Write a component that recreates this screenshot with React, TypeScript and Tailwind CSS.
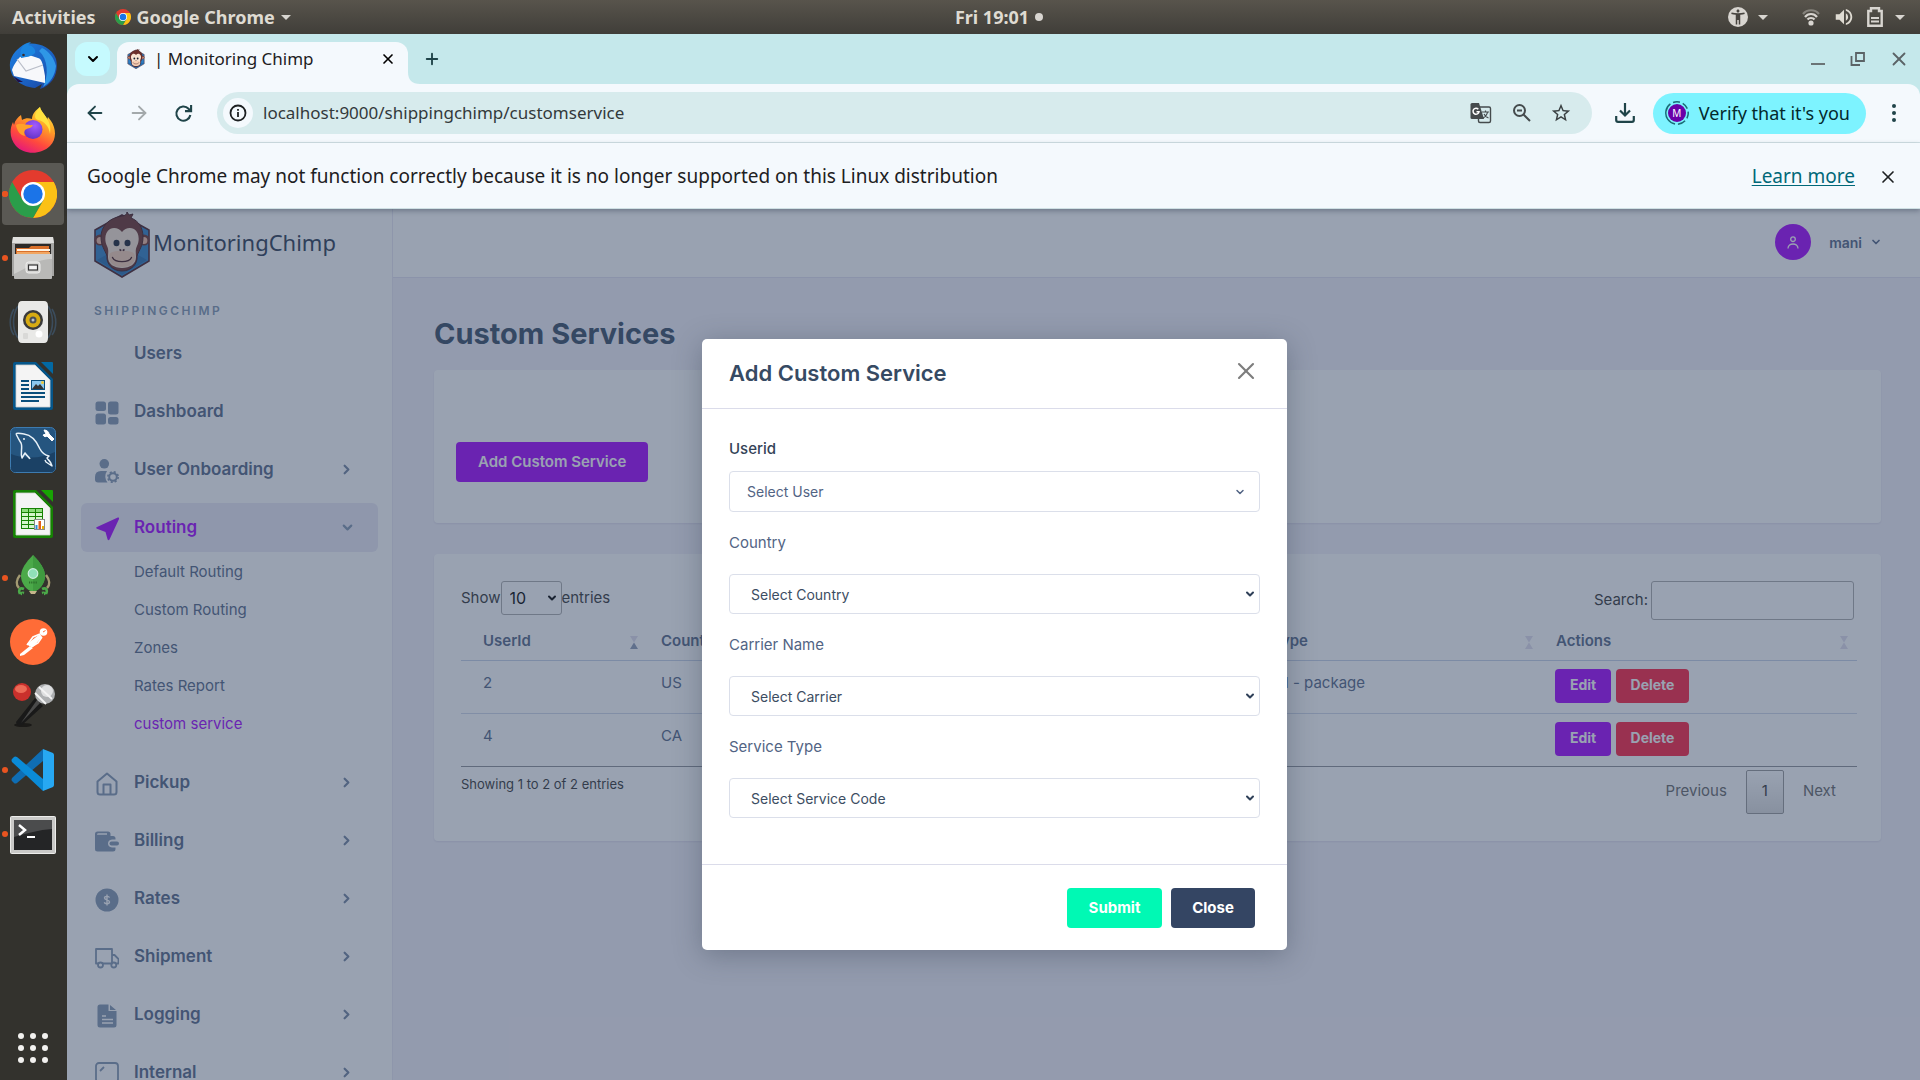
import type { ReactNode } from "react";
import { ArrowLeft, ArrowRight, ChevronDown, ChevronRight, X, Plus } from "lucide-react";
import { MdAccessibilityNew, MdOutlineStarBorder, MdVolumeUp } from "react-icons/md";

const UI_FONT = "font-['Noto_Sans',sans-serif]";
const WEB_FONT = "font-['Inter',sans-serif]";

/* ---------- Brand drawings ---------- */

function ChimpLogo({ className }: { className: string }) {
  return (
    <svg viewBox="0 0 56 66" className={className} aria-hidden="true">
      <path d="M28 3 L55 18 V49 L28 65 L1 49 V18 Z" fill="#2f7fc4" stroke="#4a1c22" strokeWidth="1.6" />
      <path d="M3 48 L28 34 L53 48 L28 63 Z" fill="#1c5d9d" opacity=".55" />
      <circle cx="6" cy="28" r="5.6" fill="#6b2f2a" />
      <circle cx="50" cy="28" r="5.6" fill="#6b2f2a" />
      <circle cx="6.2" cy="28.5" r="3.6" fill="#f0b9a0" />
      <circle cx="49.8" cy="28.5" r="3.6" fill="#f0b9a0" />
      <path d="M28 4 C31 4 33 2 33 0 L35 3 L39 2 L37 6 C45 9 49 16 49 25 C49 34 45 38 43 44 C44 52 37 59 28 59 C19 59 12 52 13 44 C11 38 7 34 7 25 C7 14 15 6 28 4 Z" fill="#6b2f2a" stroke="#43181c" strokeWidth="1" />
      <path d="M28 20 C31 16 36 15 40 17 C45 20 46 28 43 34 C41 38 42 41 42 45 C42 52 36 56 28 56 C20 56 14 52 14 45 C14 41 15 38 13 34 C10 28 11 20 16 17 C20 15 25 16 28 20 Z" fill="#f6e3d1" />
      <path d="M15 45 C15 39 21 39 28 39 C35 39 41 39 41 45 C41 51 36 55 28 55 C20 55 15 51 15 45 Z" fill="#f7cfb4" />
      <ellipse cx="22.5" cy="31" rx="3" ry="3.3" fill="#182030" />
      <ellipse cx="33.5" cy="31" rx="3" ry="3.3" fill="#182030" />
      <path d="M25.5 37.5 L27.3 38.6 M30.5 37.5 L28.7 38.6" stroke="#43181c" strokeWidth="1.5" />
      <path d="M18.5 45.5 C21 51 35 51 37.5 45.5" fill="none" stroke="#43181c" strokeWidth="1.4" strokeLinecap="round" />
    </svg>
  );
}

function ChromeLogo({ className }: { className: string }) {
  return (
    <svg viewBox="0 0 48 48" className={className} aria-hidden="true">
      <circle cx="24" cy="24" r="24" fill="#e33b2e" />
      <path d="M24 12 H44.800 A24 24 0 0 1 24 48 L34.400 30 Z" fill="#fbc116" />
      <path d="M3.200 12 A24 24 0 0 0 24 48 L34.400 30 L24 24 L13.600 30 Z" fill="#2a9d4a" />
      <circle cx="24" cy="24" r="12" fill="#fff" />
      <circle cx="24" cy="24" r="9.7" fill="#1b74e8" />
    </svg>
  );
}

const dockSvg = "size-12";

function Thunderbird() {
  return (
    <svg viewBox="0 0 48 48" className={dockSvg} aria-hidden="true">
      <defs>
        <linearGradient id="tb" x1="0" y1="0" x2="1" y2="1">
          <stop offset="0" stopColor="#1f7fe0" />
          <stop offset=".6" stopColor="#1a5fc0" />
          <stop offset="1" stopColor="#1c3f99" />
        </linearGradient>
      </defs>
      <path d="M14 3 C24 -1 42 3 47 17 C50 29 45 43 31 47 L33 42 L26 46 C14 45 2 38 1 25 C0 17 5 9 14 3 Z" fill="url(#tb)" />
      <path d="M33 6 C40 9 45 16 47 24 C46 34 41 41 34 45 C40 33 39 17 30 9 Z" fill="#2f97e6" />
      <path d="M11 15 C8 18 4 24 3 28 L5 34 L36 41 L36 34 C34 22 33 17 29 16 L20 13 Z" fill="#f7f8fb" />
      <path d="M8 17 L17 29 L34 23" fill="none" stroke="#b9bdc8" strokeWidth="1.2" />
      <path d="M12 16 C10 8 13 1 22 0 L19 3 C24 4 27 7 26 11 C22 15 17 15 12 16 Z" fill="#1b86e0" />
      <circle cx="14.500" cy="13" r="1.3" fill="#3b2a2a" />
      <path d="M4 34 L14 40 L9 40 Z" fill="#20104a" />
    </svg>
  );
}

function Firefox() {
  return (
    <svg viewBox="0 0 48 48" className={dockSvg} aria-hidden="true">
      <defs>
        <linearGradient id="ff" x1=".8" y1="0" x2=".3" y2="1">
          <stop offset="0" stopColor="#fff04a" />
          <stop offset=".35" stopColor="#ffa525" />
          <stop offset=".7" stopColor="#ff4a3d" />
          <stop offset="1" stopColor="#e4177d" />
        </linearGradient>
        <radialGradient id="ffc" cx=".6" cy=".3" r=".8">
          <stop offset="0" stopColor="#a25bff" />
          <stop offset="1" stopColor="#5b2fc0" />
        </radialGradient>
      </defs>
      <path d="M31 1 C32 7 37 9 38 14 L39 11 L42 15 C47 22 48 33 41 40 C32 49 15 49 7 40 C1 33 0 24 4 16 L5 19 C6 14 9 11 12 9 L13 14 C16 12 20 12 23 13 C23 8 27 4 31 1 Z" fill="url(#ff)" />
      <path d="M31 1 C32 7 44 14 41 28 C40 20 35 15 29 14 C24 13 26 6 31 1 Z" fill="#ffe23f" />
      <circle cx="24" cy="23.500" r="9.500" fill="url(#ffc)" />
      <path d="M7 19 C13 16 18 20 24 19 C22 23 18 22 16 24 C15 26 15 28 16 30 C11 29 8 25 7 19 Z" fill="#ffa02b" />
    </svg>
  );
}

function Files() {
  return (
    <svg viewBox="0 0 48 48" className={dockSvg} aria-hidden="true">
      <path d="M4 3 H44 L45 9 V42 H3 V9 Z" fill="#a6a6a4" />
      <path d="M4 3 H44 L45 9 H3 Z" fill="#e0e0de" />
      <rect x="6" y="10" width="36" height="12" fill="#2c2a28" />
      <path d="M7 14 H20 L22 12 H40 V22 H7 Z" fill="#d9702a" />
      <rect x="8" y="15" width="33" height="2" fill="#fff3e2" />
      <rect x="8" y="18" width="33" height="3" fill="#f1a661" />
      <rect x="5" y="20" width="38" height="25" rx="1" fill="#b9b9b7" />
      <path d="M5 20 H43 V25 C30 24 20 33 5 40 Z" fill="#cfcfcd" />
      <rect x="17" y="28" width="14" height="11" rx="2.500" fill="#d6d6d4" stroke="#efefed" />
      <rect x="19.500" y="31" width="9" height="5" fill="#f4f4f4" stroke="#333" strokeWidth="1.2" />
    </svg>
  );
}

function Rhythmbox() {
  return (
    <svg viewBox="0 0 48 48" className={dockSvg} aria-hidden="true">
      <g fill="none" stroke="#3f566c" strokeWidth="1.6" opacity=".75">
        <path d="M9 8 C3 17 3 31 9 40 M5 11 C0 19 0 30 5 37 M39 8 C45 17 45 31 39 40 M43 11 C48 19 48 30 43 37" />
      </g>
      <path d="M13 3 H35 Q39 3 39 8 V40 Q39 45 35 45 H13 Q9 45 9 40 V8 Q9 3 13 3 Z" fill="#e9e9e7" />
      <circle cx="24" cy="22" r="10" fill="#3a3a3a" />
      <circle cx="24" cy="22" r="7.500" fill="#d7ab12" />
      <circle cx="24" cy="22" r="3.500" fill="#4b4f55" />
      <circle cx="24" cy="22" r="1.500" fill="#b9c3cc" />
      <circle cx="30" cy="36" r="3.500" fill="#fff" />
      <rect x="14" y="35" width="5" height="6" rx="1" fill="#d9d9d7" />
    </svg>
  );
}

function OfficeDoc({ dark, light, children }: { dark: string; light: string; children: ReactNode }) {
  return (
    <svg viewBox="0 0 48 48" className={dockSvg} aria-hidden="true">
      <path d="M6 0 H27 L44 17 V46 Q44 48 42 48 H6 Q4 48 4 46 V2 Q4 0 6 0 Z" fill={dark} />
      <path d="M32 0 H43 Q44 0 44 1 V12 Z" fill={light} />
      <path d="M7 3 H26 L41 18 V45 H7 Z" fill="#f4f4f4" stroke="#cfcfcf" strokeWidth=".8" />
      {children}
    </svg>
  );
}

function Writer() {
  return (
    <OfficeDoc dark="#05568a" light="#0369a3">
      <path d="M12 19 H20 M12 23 H20 M12 27 H20 M12 31 H36 M12 35 H36 M12 39 H30" stroke="#0a4f7c" strokeWidth="2" />
      <rect x="22.500" y="18.500" width="13" height="9" fill="#8cc8ee" stroke="#0a4f7c" />
      <path d="M23 27 L27 22 L29 24 L31 22 L35 27 Z" fill="#333" />
      <circle cx="33.500" cy="20.500" r="1.500" fill="#f0c93a" />
    </OfficeDoc>
  );
}

function Calc() {
  return (
    <OfficeDoc dark="#168203" light="#18a303">
      <rect x="12.500" y="18.500" width="21" height="20" fill="#d4f5cc" stroke="#168203" />
      <rect x="13" y="19" width="20" height="3" fill="#8ddc7c" />
      <path d="M12 22.500 H34 M12 26.500 H34 M12 30.500 H34 M12 34.500 H34 M19.500 18 V39 M26.500 18 V39" stroke="#168203" />
      <rect x="25.500" y="29.500" width="10" height="10" fill="#fff" stroke="#8a8a8a" />
      <rect x="26.500" y="35" width="2" height="4" fill="#2b8fd6" />
      <rect x="29.500" y="31" width="2.500" height="8" fill="#e0601c" />
      <rect x="33" y="36" width="2" height="3" fill="#f0b400" />
    </OfficeDoc>
  );
}

function Workbench() {
  return (
    <svg viewBox="0 0 48 48" className={dockSvg} aria-hidden="true">
      <rect x="1.500" y="1.500" width="45" height="45" rx="5" fill="#25557f" stroke="#3d7bb0" />
      <path d="M2 28 C18 34 34 32 46 26 V42 Q46 46 42 46 H6 Q2 46 2 42 Z" fill="#1b4165" />
      <path d="M7 8 C8 6 12 8 15 8 C23 9 28 16 31 23 C33 27 35 29 40 30 L38 32 C39 34 42 35 43 40 L37 36 L36 34 M7 8 C9 12 10 14 12 17 C14 21 11 27 13 32 L16 27 C18 30 20 31 21 33" fill="none" stroke="#e8f1f8" strokeWidth="1.5" strokeLinejoin="round" />
      <circle cx="15" cy="13" r=".9" fill="#fff" />
      <path d="M35 4 L37 8 L34 9 C35 11 37 11 38 10 L43 15 L45 13 L40 8 C40 6 38 4 35 4 Z" fill="#fff" stroke="#fff" />
    </svg>
  );
}

function Rocket() {
  return (
    <svg viewBox="0 0 48 48" className={dockSvg} aria-hidden="true">
      <path d="M11 21 C7 26 7 31 10 34 M37 21 C41 26 41 31 38 34" fill="none" stroke="#a39a72" strokeWidth="2.500" />
      <path d="M24 1 C31 8 36 15 36 22 C36 29 31 36 24 38 C17 36 12 29 12 22 C12 15 17 8 24 1 Z" fill="#4ba949" />
      <path d="M24 1 C31 8 36 15 36 22 C36 29 31 36 24 38 Z" fill="#3f9a3f" />
      <circle cx="24" cy="19.500" r="4.800" fill="#8fe0b8" stroke="#cdeedd" strokeWidth="1.200" />
      <path d="M20 28.500 H28" stroke="#2c6f2c" strokeWidth="2" strokeDasharray="1.200 1" />
      <path d="M20 37 H28 L26 40 H22 Z" fill="#c5b58a" />
      <path d="M15 35 C11 33 9 36 11 40 M15 39 C12 38 12 40 13 40 M33 35 C37 33 39 36 37 40 M33 39 C36 38 36 40 35 40" fill="none" stroke="#4ba949" strokeWidth="2.600" />
    </svg>
  );
}

function Postman() {
  return (
    <svg viewBox="0 0 48 48" className={dockSvg} aria-hidden="true">
      <circle cx="24" cy="24" r="23" fill="#ff6c37" />
      <circle cx="34.500" cy="14" r="3.800" fill="#fff" />
      <path d="M31 16 L33 19 L24 29 L20 28 L18 26 Z" fill="#fff" />
      <path d="M18 27 L24 19 L31 16 M33 19 L29 25 L22 29" fill="none" stroke="#fff" strokeWidth="1.600" />
      <path d="M21 28 L11 36 L11 38 L15 37 L24 30 Z" fill="#fff" />
      <path d="M34 14 L36.500 12.500" stroke="#ff6c37" />
    </svg>
  );
}

function Recorder() {
  return (
    <svg viewBox="0 0 48 48" className={dockSvg} aria-hidden="true">
      <ellipse cx="14" cy="43" rx="9" ry="2" fill="#1b1a18" />
      <path d="M26 16 L34 24 L13 43 Q8 45 7 40 Z" fill="#191919" />
      <path d="M28 18 L31 21 L12 41 Z" fill="#4a4a4a" />
      <circle cx="36" cy="12" r="10" fill="#aeb0b2" />
      <circle cx="38" cy="9" r="6" fill="#dedfe0" />
      <path d="M26 11 L37 22 M30 5 L43 17" stroke="#f3f3f3" strokeWidth="1.800" />
      <circle cx="13" cy="10" r="9" fill="#c9302c" />
      <ellipse cx="12" cy="7" rx="6" ry="4" fill="#ec6a56" />
    </svg>
  );
}

function VsCode() {
  return (
    <svg viewBox="0 0 48 48" className={dockSvg} aria-hidden="true">
      <path d="M3 32 L34 3 V15 L8 37 Q6 38 5 37 L3 35 Q2 34 3 32 Z" fill="#0f6db3" />
      <path d="M3 16 L34 45 V33 L8 11 Q6 10 5 11 L3 13 Q2 14 3 16 Z" fill="#0a8bd8" />
      <path d="M34 3 L44 7 Q45 8 45 9 V39 Q45 40 44 41 L34 45 Z" fill="#27a8f2" />
    </svg>
  );
}

function Terminal() {
  return (
    <svg viewBox="0 0 48 48" className={dockSvg} aria-hidden="true">
      <rect x="1.500" y="6.500" width="45" height="37" rx="1" fill="#c9c9c7" stroke="#ededeb" />
      <rect x="5" y="10" width="38" height="30" fill="#242526" />
      <path d="M5 10 H43 V19 C30 20 18 23 5 27 Z" fill="#4b4c4d" />
      <path d="M10 15 L16 20 L10 25" fill="none" stroke="#fff" strokeWidth="2.500" />
      <path d="M18 27 H26" stroke="#fff" strokeWidth="2" />
    </svg>
  );
}

const dockApps: { name: string; icon: ReactNode; running?: boolean; active?: boolean }[] = [
  { name: "Thunderbird Mail", icon: <Thunderbird /> },
  { name: "Firefox", icon: <Firefox /> },
  { name: "Google Chrome", icon: <ChromeLogo className={dockSvg} />, running: true, active: true },
  { name: "Files", icon: <Files />, running: true },
  { name: "Rhythmbox", icon: <Rhythmbox /> },
  { name: "LibreOffice Writer", icon: <Writer /> },
  { name: "MySQL Workbench", icon: <Workbench /> },
  { name: "LibreOffice Calc", icon: <Calc /> },
  { name: "Robo 3T", icon: <Rocket />, running: true },
  { name: "Postman", icon: <Postman /> },
  { name: "Sound Recorder", icon: <Recorder /> },
  { name: "Visual Studio Code", icon: <VsCode />, running: true },
  { name: "Terminal", icon: <Terminal />, running: true },
];

function Caret() {
  return <span className="border-x-[5px] border-t-[5px] border-x-transparent border-t-[#d8d5d0]" />;
}

function SystemBar() {
  return (
    <header className={`${UI_FONT} grid h-[34px] shrink-0 grid-cols-3 items-center bg-gradient-to-b from-[#58544c] to-[#403e39] text-[18px] font-bold text-[#dfdbd2]`}>
      <div className="flex items-center pl-3">
        <button>Activities</button>
        <button className="ml-[19px] flex items-center gap-1.5">
          <ChromeLogo className="size-4" />
          Google Chrome
          <Caret />
        </button>
      </div>
      <button className="flex items-center justify-center gap-1.5 pl-[78px]">
        Fri 19:01
        <span className="size-2 rounded-full bg-[#d8d5d0]" />
      </button>
      <div className="flex items-center justify-end pr-[15px]">
        <button aria-label="Accessibility" className="flex items-center gap-2.5">
          <span className="flex size-5 items-center justify-center rounded-full bg-[#d8d5d0] text-[#47443f]">
            <MdAccessibilityNew className="size-[18px]" />
          </span>
          <Caret />
        </button>
        <button aria-label="System" className="ml-[33px] flex items-center gap-3">
          <svg viewBox="0 0 20 18" className="h-[18px] w-5" fill="none" stroke="#d8d5d0" strokeWidth="2.200" aria-hidden="true">
            <path d="M2 6 C6 1 14 1 18 6" opacity=".4" />
            <path d="M4 9 C7 5 13 5 16 9" />
            <path d="M6.500 11.500 C8 9.500 12 9.500 13.500 11.500" />
            <circle cx="10" cy="15" r="1.500" fill="#d8d5d0" />
          </svg>
          <MdVolumeUp className="size-[22px]" />
          <svg viewBox="0 0 16 20" className="h-5 w-4" aria-hidden="true">
            <path d="M1.300 4 H4 V1.300 H12 V4 H14.700 V18.700 H1.300 Z" fill="none" stroke="#d8d5d0" strokeWidth="2.400" />
            <path d="M4 11 H12 M4 14.500 H12" stroke="#d8d5d0" strokeWidth="2" />
          </svg>
          <Caret />
        </button>
      </div>
    </header>
  );
}

function Dock() {
  return (
    <nav aria-label="Dock" className="flex w-[67px] shrink-0 flex-col justify-between bg-[#33322d]">
      <ul className="flex flex-col gap-0.5 pt-px">
        {dockApps.map((app) => (
          <li key={app.name} className="relative pl-0.5">
            {app.running && <span className="absolute top-7 left-0.5 size-1.5 rounded-full bg-[#e95420]" />}
            <button
              aria-label={app.name}
              className={app.active ? "flex size-[62px] items-center justify-center rounded bg-[#5a5954]" : "flex size-[62px] items-center justify-center"}
            >
              {app.icon}
            </button>
            {app.active && <span className="absolute top-7 left-0.5 size-1.5 rounded-full bg-[#e95420]" />}
          </li>
        ))}
      </ul>
      <button aria-label="Show applications" className="mr-[19px] mb-[17px] ml-[18px] grid grid-cols-3 gap-1.5">
        {Array.from({ length: 9 }, (_, i) => (
          <span key={i} className="size-1.5 rounded-full bg-[#f2f1ef]" />
        ))}
      </button>
    </nav>
  );
}

/* ---------- Browser chrome ---------- */

function TabStrip() {
  return (
    <div className="flex h-[50px] items-center justify-between bg-[#c5e8eb] pr-[10px] pl-2">
      <div className="flex h-full items-end">
        <button aria-label="Search tabs" className="mb-2 flex h-[34px] w-[35px] items-center justify-center rounded-xl bg-[#c6fafe]">
          <ChevronDown className="size-4 text-black" strokeWidth={3} />
        </button>
        <div className="relative ml-[7px] flex h-[42px] w-[291px] items-center rounded-t-xl bg-[#f4f9fd] pr-3 pb-2 pl-[9px]">
          <svg viewBox="0 0 12 12" className="absolute bottom-0 -left-3 size-3" aria-hidden="true">
            <path d="M12 0 V12 H0 C8 12 12 8 12 0 Z" fill="#f4f9fd" />
          </svg>
          <svg viewBox="0 0 12 12" className="absolute -right-3 bottom-0 size-3" aria-hidden="true">
            <path d="M0 0 V12 H12 C4 12 0 8 0 0 Z" fill="#f4f9fd" />
          </svg>
          <ChimpLogo className="h-5 w-5" />
          <span className="ml-2 flex-1 text-[17px] text-[#1d2022]">| Monitoring Chimp</span>
          <button aria-label="Close tab">
            <X className="size-4 text-black" strokeWidth={2.500} />
          </button>
        </div>
        <button aria-label="New tab" className="mb-4 ml-[15px]">
          <Plus className="size-[18px] text-[#1f4449]" strokeWidth={2.500} />
        </button>
      </div>
      <div className="flex items-center text-[#5b6366]">
        <button aria-label="Minimize" className="mt-2.5 h-0.5 w-3.5 bg-[#6b7476]" />
        <button aria-label="Restore" className="ml-[25px]">
          <svg viewBox="0 0 16 16" className="size-4" fill="none" stroke="currentColor" strokeWidth="1.800" aria-hidden="true">
            <path d="M6 2 H14 V10 H6 Z M1.500 5 V14 H10" />
          </svg>
        </button>
        <button aria-label="Close window" className="ml-[22px]">
          <X className="size-[22px]" strokeWidth={2} />
        </button>
      </div>
    </div>
  );
}

function Toolbar() {
  return (
    <div className="bg-[#c5e8eb]">
      <div className="flex h-[59px] items-center rounded-t-xl border-b border-[#d3e2e6] bg-[#f4f9fd] pr-6 pl-[17px]">
        <button aria-label="Back">
          <ArrowLeft className="size-[22px] text-[#1f4449]" />
        </button>
        <button aria-label="Forward" className="ml-[22px]">
          <ArrowRight className="size-[22px] text-[#a3a9ab]" />
        </button>
        <button aria-label="Reload" className="ml-6">
          <svg viewBox="0 0 18 18" className="size-[19px]" fill="none" stroke="#1f4449" strokeWidth="2" aria-hidden="true">
            <path d="M15.500 10.500 A6.700 6.700 0 1 1 13.800 4.500 L16 6.600 M16.200 1 V6.800 H10.400" />
          </svg>
        </button>
        <div className="ml-6 flex h-[42px] flex-1 items-center rounded-full bg-[#d7ebed] pr-5 pl-1.5">
          <button aria-label="Site information" className="flex size-[30px] items-center justify-center rounded-full bg-[#f4f9fd]">
            <svg viewBox="0 0 18 18" className="size-[18px]" fill="none" stroke="#1d2022" strokeWidth="1.800" aria-hidden="true">
              <circle cx="9" cy="9" r="7.500" />
              <path d="M9 8 V13 M9 5 V6.800" />
            </svg>
          </button>
          <input
            aria-label="Address"
            defaultValue="localhost:9000/shippingchimp/customservice"
            className="ml-2.5 flex-1 bg-transparent text-[17px] text-[#33393b] outline-none"
          />
          <button aria-label="Translate this page">
            <svg viewBox="0 0 22 22" className="size-[22px]" aria-hidden="true">
              <rect x="8.500" y="5" width="12" height="15.500" rx="1.500" fill="none" stroke="#454b4d" strokeWidth="1.400" />
              <path d="M2 1 H9 L14 17 H2 Q.500 17 .500 15.500 V2.500 Q.500 1 2 1 Z" fill="#454b4d" />
              <path d="M8.300 7.200 A3 3 0 1 0 9 9.800 H6.500" fill="none" stroke="#fff" strokeWidth="1.500" />
              <path d="M12 10 H19 M15.500 8.500 V10 M17.500 10 C17 13 15 15 13 16 M14 12 C15 14 17 15.500 18.500 16" fill="none" stroke="#454b4d" strokeWidth="1.200" />
            </svg>
          </button>
          <button aria-label="Zoom" className="ml-5">
            <svg viewBox="0 0 20 20" className="size-5" fill="none" stroke="#454b4d" strokeWidth="2" aria-hidden="true">
              <circle cx="7.500" cy="7.500" r="5.500" />
              <path d="M11.500 11.500 L18 18 M5 7.500 H10" />
            </svg>
          </button>
          <button aria-label="Bookmark this tab" className="ml-[18px]">
            <MdOutlineStarBorder className="size-[22px] text-[#3a4042]" />
          </button>
        </div>
        <button aria-label="Downloads" className="ml-[23px]">
          <svg viewBox="0 0 20 20" className="size-5" fill="none" stroke="#1f4449" strokeWidth="2.200" aria-hidden="true">
            <path d="M10 0 V12 M5 7.500 L10 12.500 L15 7.500 M1.200 13 V17 Q1.200 18.800 3 18.800 H17 Q18.800 18.800 18.800 17 V13" />
          </svg>
        </button>
        <button className="ml-[18px] flex h-[41px] items-center gap-2.5 rounded-full bg-[#7df3ff] pr-4 pl-3 text-[18px] text-[#03292c]">
          <span className="relative flex size-6 items-center justify-center">
            <svg viewBox="0 0 24 24" className="absolute inset-0 size-6" fill="none" stroke="#1a6d76" strokeWidth="1.500" aria-hidden="true">
              <circle cx="12" cy="12" r="11.200" strokeDasharray="26 3 7 3 7 3 7 3 8 3.400" transform="rotate(100 12 12)" />
            </svg>
            <span className="flex size-[18px] items-center justify-center rounded-full bg-[#6a00a8] text-[10px] text-white">M</span>
          </span>
          Verify that it's you
        </button>
        <button aria-label="Menu" className="ml-[26px] flex flex-col gap-[3px]">
          <span className="size-1 rounded-full bg-[#1f4449]" />
          <span className="size-1 rounded-full bg-[#1f4449]" />
          <span className="size-1 rounded-full bg-[#1f4449]" />
        </button>
      </div>
    </div>
  );
}

function InfoBar() {
  return (
    <div className="relative z-20 flex h-[66px] items-center border-b border-[#cfe0e4] bg-[#f4f9fd] pt-0.5 pr-[22px] pl-5 text-[19px] text-[#1d2022] shadow-[0_2px_5px_rgba(30,40,60,0.35)]">
      <p className="flex-1">Google Chrome may not function correctly because it is no longer supported on this Linux distribution</p>
      <a href="#learn-more" className="text-[#006878] underline underline-offset-2">Learn more</a>
      <button aria-label="Dismiss" className="ml-[23px]">
        <X className="size-5" />
      </button>
    </div>
  );
}

/* ---------- Web application ---------- */

const navSvg = "size-6";

const GridIcon = (
  <svg viewBox="0 0 24 24" className={navSvg} fill="currentColor" aria-hidden="true">
    <rect x="0.500" y="0.500" width="10.500" height="9.500" rx="2.500" />
    <rect x="13" y="0.500" width="10.500" height="13" rx="2.500" />
    <rect x="0.500" y="12.500" width="10.500" height="11" rx="2.500" />
    <rect x="13" y="16" width="10.500" height="7.500" rx="2.500" />
  </svg>
);

const UserGearIcon = (
  <svg viewBox="0 0 24 24" className={navSvg} fill="currentColor" aria-hidden="true">
    <circle cx="9.300" cy="4.800" r="4.800" />
    <path d="M6 12 H12 Q10 15 10.300 18 Q10.600 21.500 12.500 23.500 H3 Q0 23.500 0 20.500 V18 Q0 12 6 12 Z" />
    <circle cx="18" cy="18" r="3.800" fill="none" stroke="currentColor" strokeWidth="2" />
    <circle cx="18" cy="18" r="5.200" fill="none" stroke="currentColor" strokeWidth="1.600" strokeDasharray="2.100 2" />
  </svg>
);

const SendIcon = (
  <svg viewBox="0 0 24 24" className={navSvg} fill="currentColor" aria-hidden="true">
    <path d="M22.800 .6 Q24.500 .2 24 2 L14.500 22.500 Q13.500 24 12.600 22.400 L10.500 15 L2 11.800 Q.2 10.800 2 9.900 Z" />
  </svg>
);

const HomeIcon = (
  <svg viewBox="0 0 24 24" className={navSvg} fill="none" stroke="currentColor" strokeWidth="2" strokeLinejoin="round" aria-hidden="true">
    <path d="M2.500 9.500 L12 1.500 L21.500 9.500 V20 Q21.500 22.500 19 22.500 H5 Q2.500 22.500 2.500 20 Z M8.500 22 V12.500 H15.500 V22" />
  </svg>
);

const WalletIcon = (
  <svg viewBox="0 0 24 24" className={navSvg} fill="currentColor" aria-hidden="true">
    <path d="M2.500 1.500 H13 Q15.500 1.500 15.500 4 V6 H18 Q20.500 6 20.500 8.500 V9.500 H17 Q13 10 13 13.500 Q13 17 17 17.500 H20.500 V19 Q20.500 21.500 18 21.500 H2.500 Q0 21.500 0 19 V4 Q0 1.500 2.500 1.500 Z M2 4.700 H12 V3.300 H3.500 Q2 3.300 2 4.700 Z" fillRule="evenodd" />
    <rect x="14.500" y="11.500" width="9.500" height="4" rx="2" />
  </svg>
);

const DollarIcon = (
  <svg viewBox="0 0 24 24" className={navSvg} aria-hidden="true">
    <circle cx="12" cy="12" r="11.500" fill="currentColor" />
    <path d="M14.500 9.600 C14 8 9.600 7.800 9.500 10 C9.500 12.300 14.500 11.500 14.500 14 C14.500 16.200 9.800 16.200 9.300 14.300 M12 6.500 V17.500" fill="none" stroke="#fff" strokeWidth="1.400" />
  </svg>
);

const TruckIcon = (
  <svg viewBox="0 0 24 24" className={navSvg} fill="none" stroke="currentColor" strokeWidth="1.800" strokeLinejoin="round" aria-hidden="true">
    <path d="M3 17.500 H1 V3 H17 V17.500 H8 M17 9 H19.500 L23.500 13 V17.500 H21.500 M16 17.500 H17" />
    <circle cx="5.500" cy="19" r="2.500" />
    <circle cx="18.800" cy="19" r="2.500" />
  </svg>
);

const FileIcon = (
  <svg viewBox="0 0 24 24" className={navSvg} aria-hidden="true">
    <path d="M5 .5 H13.500 V7 H21.500 V21 Q21.500 23.500 19 23.500 H5 Q2.500 23.500 2.500 21 V3 Q2.500 .5 5 .5 Z M15 1 L21 6 H15 Z" fill="currentColor" />
    <path d="M7 12 H11 M7 15.500 H18 M7 19 H18" stroke="#fff" strokeWidth="1.300" />
  </svg>
);

const ScreenIcon = (
  <svg viewBox="0 0 24 24" className={navSvg} fill="none" stroke="currentColor" strokeWidth="1.800" aria-hidden="true">
    <rect x="1" y="1" width="22" height="19" rx="3" />
    <path d="M5 9 L9 5" />
  </svg>
);

function NavItem({ label, icon, expandable = false }: { label: string; icon?: ReactNode; expandable?: boolean }) {
  return (
    <li className="mx-[14px] mb-[9px]">
      <a href={`#${label}`} className="flex h-[49px] items-center pr-6 pl-[14px] text-[17px] font-semibold text-[#526484]">
        <span className="w-[39px] pt-0.5 text-[#8094ae]">{icon}</span>
        <span className="flex-1">{label}</span>
        {expandable && <ChevronRight className="size-[15px] text-[#71829e]" strokeWidth={3.500} />}
      </a>
    </li>
  );
}

function Sidebar() {
  const routing = ["Default Routing", "Custom Routing", "Zones", "Rates Report"];
  return (
    <aside className="flex w-[326px] shrink-0 flex-col border-r border-[#e8e6f3] bg-white">
      <a href="#home" className="flex h-[69px] shrink-0 items-start pt-[3px] pl-[27px]">
        <ChimpLogo className="h-[66px] w-14" />
        <span className={`${UI_FONT} ml-[3px] pt-3.5 text-[22px] text-[#2b3850]`}>MonitoringChimp</span>
      </a>
      <h2 className="h-[51px] shrink-0 pt-[25px] pl-[27px] text-[12px] leading-4 font-semibold tracking-[0.2em] text-[#8094ae]">SHIPPINGCHIMP</h2>
      <ul>
        <NavItem label="Users" />
        <NavItem label="Dashboard" icon={GridIcon} />
        <NavItem label="User Onboarding" icon={UserGearIcon} expandable />
        <li className="mx-[14px] mb-[15px]">
          <a href="#Routing" className="flex h-[49px] items-center rounded-md bg-[#ebe9f5] pr-[23px] pl-[14px] text-[17px] font-semibold text-[#a100ff]">
            <span className="w-[39px] pt-0.5">{SendIcon}</span>
            <span className="flex-1">Routing</span>
            <ChevronDown className="size-[15px] text-[#8094ae]" strokeWidth={3.500} />
          </a>
          <ul className="pt-px pl-[53px] text-[15px] leading-[38px] text-[#526484]">
            {routing.map((item) => (
              <li key={item}>
                <a href={`#${item}`}>{item}</a>
              </li>
            ))}
            <li>
              <a href="#custom-service" aria-current="page" className="text-[#a100ff]">custom service</a>
            </li>
          </ul>
        </li>
        <NavItem label="Pickup" icon={HomeIcon} expandable />
        <NavItem label="Billing" icon={WalletIcon} expandable />
        <NavItem label="Rates" icon={DollarIcon} expandable />
        <NavItem label="Shipment" icon={TruckIcon} expandable />
        <NavItem label="Logging" icon={FileIcon} expandable />
        <NavItem label="Internal" icon={ScreenIcon} expandable />
      </ul>
    </aside>
  );
}

function SortMark({ ascending = false }: { ascending?: boolean }) {
  return (
    <svg viewBox="0 0 8 13" className="absolute top-4 right-[9px] h-[13px] w-2" aria-hidden="true">
      <path d="M0 0 H8 L4 6.500 Z" fill="#e0ddec" />
      <path d="M0 13 H8 L4 6.500 Z" fill={ascending ? "#8c9ab5" : "#e0ddec"} />
    </svg>
  );
}

const services = [
  { user: "2", country: "US", carrier: "UPS", type: "Registered - package" },
  { user: "4", country: "CA", carrier: "UPS", type: "Standard" },
];

function ServicesTable() {
  const cell = "pt-[11px] pl-[14px] leading-[22px]";
  const head = "relative pt-0.5 pl-[14px] text-left font-semibold";
  return (
    <table className="w-full table-fixed border-b border-[#8d8f95] text-[15px] text-[#526484]">
      <colgroup>
        <col className="w-[186px]" />
        <col />
        <col className="w-[275px]" />
        <col className="w-[343px]" />
        <col className="w-[315px]" />
      </colgroup>
      <thead>
        <tr className="h-10 border-b border-[#c5d0e6]">
          <th className="relative pt-0.5 pl-[22px] text-left font-semibold">UserId<SortMark ascending /></th>
          <th className={head}>Country<SortMark /></th>
          <th className={head}>Carrier Name<SortMark /></th>
          <th className={head}>Service Type<SortMark /></th>
          <th className={head}>Actions<SortMark /></th>
        </tr>
      </thead>
      <tbody>
        {services.map((s) => (
          <tr key={s.user} className="h-[53px] border-t border-[#ced6e8] align-top">
            <td className="pt-[11px] pl-[22px] leading-[22px]">{s.user}</td>
            <td className={cell}>{s.country}</td>
            <td className={cell}>{s.carrier}</td>
            <td className={cell}>{s.type}</td>
            <td className="pt-2 pl-[13px]">
              <div className="flex gap-[5px] text-[14px] font-bold text-white">
                <button className="h-[34px] w-14 rounded bg-[#a100ff] pb-[3px]">Edit</button>
                <button className="h-[34px] w-[73px] rounded bg-[#ff1d3d] pb-[3px]">Delete</button>
              </div>
            </td>
          </tr>
        ))}
      </tbody>
    </table>
  );
}

function MainPage() {
  return (
    <div className="flex min-w-0 flex-1 flex-col">
      <header className="flex h-[69px] shrink-0 items-center justify-end border-b border-[#e3e1f0] bg-white pr-[38px] pb-0.5">
        <button className="flex items-center text-[14px] font-semibold text-[#526484]">
          <span className="mr-[18px] flex size-9 items-center justify-center rounded-full bg-[#a100ff]">
            <svg viewBox="0 0 12 13" className="h-[13px] w-3" fill="none" stroke="#fff" strokeWidth="1.300" aria-hidden="true">
              <circle cx="6" cy="3.200" r="2.300" />
              <path d="M1 12.500 C1 6.500 11 6.500 11 12.500" />
            </svg>
          </span>
          mani
          <ChevronDown className="ml-2 size-3" strokeWidth={3.500} />
        </button>
      </header>
      <main className="flex flex-col pt-9 pr-[39px] pl-[41px]">
        <h1 className="text-[29px] leading-10 font-bold text-[#364a63]">Custom Services</h1>
        <section className="mt-4 rounded bg-white px-[22px] pt-[72px] pb-[41px] shadow-[0_1px_2px_rgba(80,60,120,0.12)]">
          <button className="h-10 rounded bg-[#a100ff] px-[22px] text-[15px] font-semibold text-white">Add Custom Service</button>
        </section>
        <section className="mt-[31px] rounded bg-white pt-[27px] pr-6 pb-[26px] pl-[27px] text-[15px] text-[#333] shadow-[0_1px_2px_rgba(80,60,120,0.12)]">
          <div className="flex items-start justify-between">
            <label className="flex items-center">
              Show
              <span className="relative flex items-center">
                <select defaultValue="10" className="h-[34px] w-[61px] appearance-none rounded-[3px] border border-[#aaa] bg-transparent pl-2 text-[16px] text-black">
                  <option>10</option>
                  <option>25</option>
                </select>
                <ChevronDown className="pointer-events-none absolute right-1 size-3 text-black" strokeWidth={4} />
              </span>
              entries
            </label>
            <label className="mr-[3px] flex items-center gap-[3px]">
              Search:
              <input type="search" className="h-[39px] w-[203px] rounded-[3px] border border-[#aaa] px-2" />
            </label>
          </div>
          <ServicesTable />
          <div className="flex items-start justify-between pt-[3px]">
            <p className="pt-1 text-[13px] leading-5">Showing 1 to 2 of 2 entries</p>
            <div className="mr-1 mb-px flex items-center text-[#666]">
              <button className="px-[17px]">Previous</button>
              <button className="ml-0.5 h-11 w-[38px] rounded-xs border border-[#979797] bg-gradient-to-b from-white to-[#dcdcdc] text-[#333]">1</button>
              <button className="ml-0.5 px-[17px]">Next</button>
            </div>
          </div>
        </section>
      </main>
    </div>
  );
}

function NativeField({ id, label, placeholder }: { id: string; label: string; placeholder: string }) {
  return (
    <div className="flex flex-col">
      <label htmlFor={id} className="mt-5 text-[15px] leading-[22px] text-[#526484]">{label}</label>
      <span className="relative mt-5 flex items-center">
        <select id={id} className="h-10 w-full appearance-none rounded border border-[#dbdfea] bg-white pl-[21px] text-[14px] text-[#3c4d62]">
          <option>{placeholder}</option>
        </select>
        <ChevronDown className="pointer-events-none absolute right-1 size-3 text-[#2f4058]" strokeWidth={4} />
      </span>
    </div>
  );
}

function AddServiceDialog() {
  return (
    <div className="absolute inset-0 z-10 flex items-start justify-center bg-[#344563]/50 pt-[130px] pl-0.5">
      <div role="dialog" aria-modal="true" aria-labelledby="dialog-title" className="w-[585px] rounded-[5px] bg-white shadow-[0_5px_28px_rgba(43,55,72,0.35)]">
        <div className="flex h-[70px] items-center justify-between border-b border-[#dbdcea] pr-[27px] pl-[27px]">
          <h2 id="dialog-title" className="text-[22px] font-semibold text-[#364a63]">Add Custom Service</h2>
          <button aria-label="Close dialog" className="pb-1.5">
            <X className="size-7 text-[#7d7d7d]" strokeWidth={1.800} />
          </button>
        </div>
        <form className="flex flex-col px-[27px] pt-[29px] pb-[46px]">
          <label htmlFor="user" className="text-[15px] leading-[22px] font-medium text-[#344357]">Userid</label>
          <span className="relative mt-[11px] flex items-center">
            <select id="user" className="h-[41px] w-full appearance-none rounded border border-[#dbdfea] bg-white pl-[17px] text-[14px] text-[#526484]">
              <option>Select User</option>
            </select>
            <ChevronDown className="pointer-events-none absolute right-3.5 size-3 text-[#526484]" strokeWidth={3} />
          </span>
          <NativeField id="country" label="Country" placeholder="Select Country" />
          <NativeField id="carrier" label="Carrier Name" placeholder="Select Carrier" />
          <NativeField id="service" label="Service Type" placeholder="Select Service Code" />
        </form>
        <div className="flex justify-end gap-[9px] border-t border-[#dbdcea] pt-[23px] pr-8 pb-[22px] text-[15px] font-bold text-white">
          <button className="h-10 w-[95px] rounded bg-[#00f9b4]">Submit</button>
          <button className="h-10 w-[84px] rounded bg-[#344563]">Close</button>
        </div>
      </div>
    </div>
  );
}

export default function App() {
  return (
    <div className="flex h-screen flex-col overflow-hidden">
      <SystemBar />
      <div className="flex min-h-0 flex-1">
        <Dock />
        <div className={`${UI_FONT} flex min-w-0 flex-1 flex-col`}>
          <TabStrip />
          <Toolbar />
          <InfoBar />
          <div className={`${WEB_FONT} relative flex min-h-0 flex-1 overflow-hidden bg-[#f3f1f9]`}>
            <Sidebar />
            <MainPage />
            <AddServiceDialog />
          </div>
        </div>
      </div>
    </div>
  );
}
